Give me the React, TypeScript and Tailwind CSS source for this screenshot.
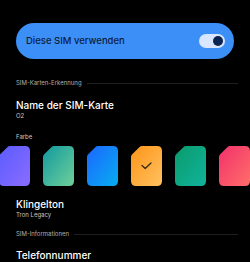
import React from "react";

const cards = [
  { id: "c1", from: "#5b5cff", to: "#8b6cff" },
  { id: "c2", from: "#11999e", to: "#6fd09a" },
  { id: "c3", from: "#1c66ff", to: "#07aef0" },
  { id: "c4", from: "#ff9419", to: "#ffc260", checked: true },
  { id: "c5", from: "#0b9b6c", to: "#10b39c" },
  { id: "c6", from: "#f2316b", to: "#ff6e69" },
];

const SimCard: React.FC<{ id: string; from: string; to: string; checked?: boolean }> = ({ id, from, to, checked }) => (
  <svg width="31" height="40" viewBox="0 0 31 40" className="shrink-0">
    <defs>
      <linearGradient id={id} x1="0" y1="0" x2="1" y2="1">
        <stop offset="0" stopColor={from} />
        <stop offset="1" stopColor={to} />
      </linearGradient>
    </defs>
    <path
      d="M10 0 H26 Q31 0 31 5 V35 Q31 40 26 40 H5 Q0 40 0 35 V11 Q0 9.5 1.2 8.3 L8.3 1.2 Q9.5 0 11 0 Z"
      fill={`url(#${id})`}
    />
    {checked && (
      <path d="M11 19.5 L14.2 22.5 L20 17" fill="none" stroke="#3a2a10" strokeWidth="1.3" strokeLinecap="round" strokeLinejoin="round" />
    )}
  </svg>
);

const SectionHeader: React.FC<{ label: string }> = ({ label }) => (
  <div className="flex items-center gap-[5px] px-[16px] pr-[12px]">
    <span className="text-[6px] leading-[8px] text-[#b0b0b0] whitespace-nowrap">{label}</span>
    <div className="h-[1px] flex-1 bg-[#1f1f1f]" />
  </div>
);

const App: React.FC = () => {
  return (
    <div
      className="w-[250px] h-[262px] overflow-hidden bg-black pt-[23px]"
      style={{ fontFamily: "Inter, 'Noto Sans', sans-serif" }}
    >
      <div className="mx-[16px] h-[36px] rounded-full bg-[#3b8ff7] flex items-center justify-between pl-[10px] pr-[9px]">
        <span className="text-[9.5px] font-medium text-[#0c1d3d]">Diese SIM verwenden</span>
        <div className="w-[26px] h-[14px] rounded-full bg-[#d9e6ff] flex items-center justify-end pr-[2px]">
          <div className="w-[10px] h-[10px] rounded-full bg-[#0b2350]" />
        </div>
      </div>

      <div className="mt-[20px]">
        <SectionHeader label="SIM-Karten-Erkennung" />
      </div>

      <div className="px-[16px] mt-[12px]">
        <div className="text-[10px] leading-[13px] font-medium text-white">Name der SIM-Karte</div>
        <div className="text-[6px] leading-[8px] text-[#c8c8c8]">O2</div>
      </div>

      <div className="px-[16px] mt-[13px] text-[6px] leading-[8px] text-[#c8c8c8]">Farbe</div>

      <div className="mt-[5px] flex gap-[13px] -ml-[1px]">
        {cards.map((c) => (
          <SimCard key={c.id} {...c} />
        ))}
      </div>

      <div className="px-[16px] mt-[12px]">
        <div className="text-[10px] leading-[13px] font-medium text-white">Klingelton</div>
        <div className="text-[6px] leading-[8px] text-[#c8c8c8]">Tron Legacy</div>
      </div>

      <div className="mt-[11px]">
        <SectionHeader label="SIM-Informationen" />
      </div>

      <div className="px-[16px] mt-[11px]">
        <div className="text-[10px] leading-[13px] font-medium text-white">Telefonnummer</div>
        <div className="text-[6px] leading-[8px] text-[#c8c8c8]">+49 176 12345678</div>
      </div>
    </div>
  );
};

export default App;
